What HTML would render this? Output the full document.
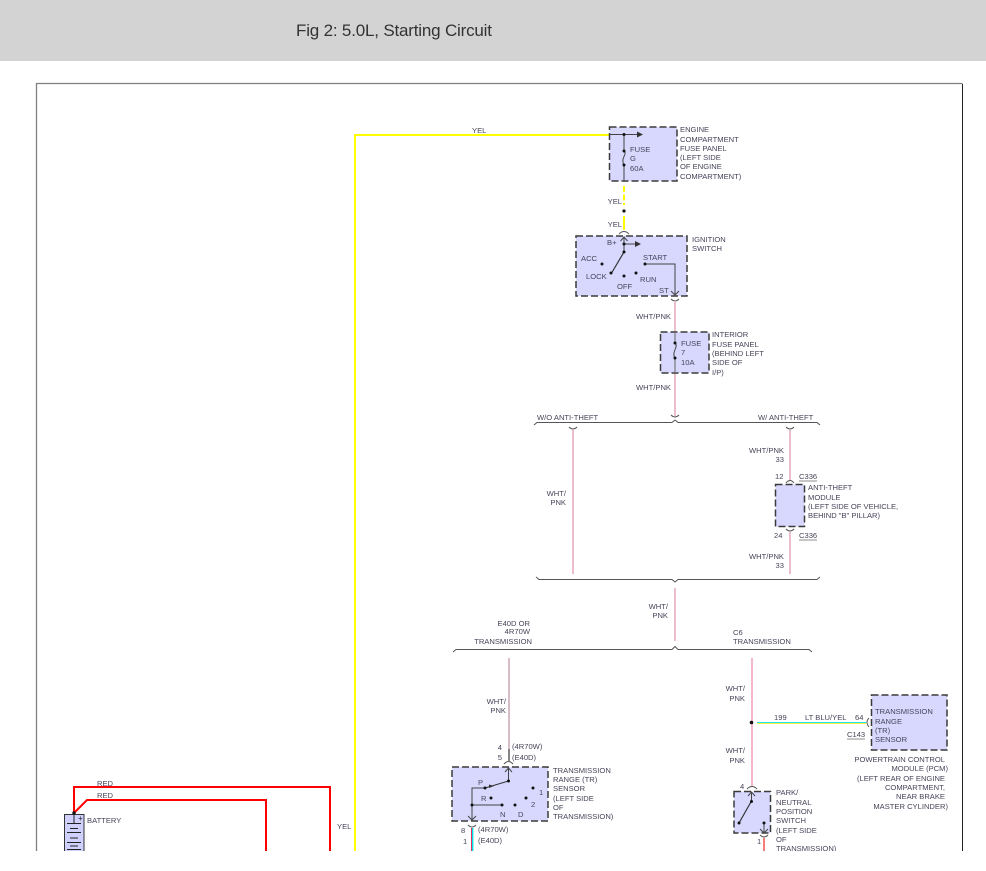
<!DOCTYPE html>
<html>
<head>
<meta charset="utf-8">
<title>Fig 2: 5.0L, Starting Circuit</title>
<style>
html,body{margin:0;padding:0;background:#fff;width:986px;height:871px;overflow:hidden}
svg{display:block}
text{font-family:"Liberation Sans",Arial,sans-serif;font-size:7.6px;fill:#45455a}
.e{text-anchor:end}
.t{font-size:17px;fill:#333}
.box{fill:#d8d8ff;stroke:#3a3a3a;stroke-width:1.500;stroke-dasharray:7 3}
.k{fill:none;stroke:#444;stroke-width:1}
.b{fill:none;stroke:#555;stroke-width:1}
.p{fill:none;stroke:#e8d8de;stroke-width:2}
.q{fill:none;stroke:#eea4ba;stroke-width:1}
.g{fill:none;stroke:#777;stroke-width:1.200}
.d{fill:#111}
.u{fill:none;stroke:#666;stroke-width:.8}
</style>
</head>
<body>
<svg width="986" height="871" viewBox="0 0 986 871" xmlns="http://www.w3.org/2000/svg">
<rect x="0" y="0" width="986" height="61" fill="#d3d3d3"/>
<text class="t" x="296" y="36" textLength="196">Fig 2: 5.0L, Starting Circuit</text>

<!-- frame -->
<path d="M36.500 851V83.500H962.500" fill="none" stroke="#808080" stroke-width="1.300"/>
<path d="M962.500 84V851" fill="none" stroke="#222" stroke-width="1"/>

<!-- yellow main -->
<path d="M355 860V135H609" fill="none" stroke="#ffff00" stroke-width="2"/>
<text x="472" y="133">YEL</text>
<text x="337" y="829">YEL</text>

<!-- engine fuse panel -->
<rect class="box" x="609.500" y="127" width="67.500" height="54"/>
<path class="k" d="M609 134.500H640M624 134.500V151M624 165V181"/>
<path class="k" d="M624 151C628 154 620 158 624 165" stroke-width="1.200"/>
<path d="M637 131.500L643 134.500L637 137.500Z" fill="#333"/>
<circle class="d" cx="624" cy="134.500" r="1.500"/><circle class="d" cx="624" cy="151" r="1.500"/><circle class="d" cx="624" cy="165" r="1.500"/>
<text x="630" y="152">FUSE</text><text x="630" y="161">G</text><text x="630" y="171">60A</text>
<text x="680" y="132">ENGINE</text><text x="680" y="142">COMPARTMENT</text><text x="680" y="151">FUSE PANEL</text><text x="680" y="160">(LEFT SIDE</text><text x="680" y="169">OF ENGINE</text><text x="680" y="179">COMPARTMENT)</text>

<!-- yellow dashed -->
<path d="M624 186V205" fill="none" stroke="#ffff00" stroke-width="2" stroke-dasharray="6 2.500"/>
<path d="M624 216V230" fill="none" stroke="#ffff00" stroke-width="2"/>
<circle class="d" cx="624" cy="211" r="1.600"/>
<text class="e" x="622" y="204">YEL</text><text class="e" x="622" y="227">YEL</text>
<path class="b" d="M619 234Q624 229 629 234"/>

<!-- ignition -->
<rect class="box" x="576" y="236" width="111" height="60"/>
<path class="k" d="M624 237V252M624 244H635M620.500 241L624 237L627.500 241M645 264H675V295M671 291L675 295L679 291"/>
<path d="M635 241L641 244L635 247Z" fill="#333"/>
<path d="M624 252L611 274" fill="none" stroke="#333" stroke-width="1.200"/>
<circle class="d" cx="624" cy="244" r="1.500"/><circle class="d" cx="624" cy="252" r="1.500"/><circle class="d" cx="611" cy="273" r="1.500"/><circle class="d" cx="602" cy="264" r="1.500"/><circle class="d" cx="624" cy="276" r="1.500"/><circle class="d" cx="636" cy="273" r="1.500"/><circle class="d" cx="645" cy="264" r="1.500"/>
<text x="607" y="245">B+</text><text x="581" y="261">ACC</text><text x="586" y="279">LOCK</text><text x="617" y="289">OFF</text><text x="640" y="282">RUN</text><text x="643" y="260">START</text><text x="659" y="293">ST</text>
<text x="692" y="242">IGNITION</text><text x="692" y="251">SWITCH</text>
<path class="b" d="M671 299Q675 303 679 299"/>

<!-- wire to interior fuse -->
<path class="p" d="M675 301V332M675 373V416"/><path class="q" d="M675 301V332M675 373V416"/>
<text class="e" x="671" y="319">WHT/PNK</text>
<text class="e" x="671" y="390">WHT/PNK</text>
<rect class="box" x="660.500" y="332" width="48.500" height="41"/>
<path class="g" d="M675 332V343M675 358V373"/>
<path class="k" d="M675 343C679 347 671 352 675 358" stroke-width="1.200"/>
<circle class="d" cx="675" cy="343" r="1.500"/><circle class="d" cx="675" cy="358" r="1.500"/>
<text x="681" y="346">FUSE</text><text x="681" y="355">7</text><text x="681" y="365">10A</text>
<text x="712" y="337">INTERIOR</text><text x="712" y="347">FUSE PANEL</text><text x="712" y="356">(BEHIND LEFT</text><text x="712" y="365">SIDE OF</text><text x="712" y="375">I/P)</text>

<!-- first bracket -->
<path class="b" d="M671 415Q675 419 679 415"/>
<path class="b" d="M534 425L537 422.500H672L675 420L678 422.500H817L820 425"/>
<text x="537" y="420">W/O ANTI-THEFT</text><text x="758" y="420">W/ ANTI-THEFT</text>
<path class="b" d="M569 427Q573 431 577 427M786 427Q790 431 794 427"/>
<path class="p" d="M573 430V574M790 430V481M790 532V574"/><path class="q" d="M573 430V574M790 430V481M790 532V574"/>
<text class="e" x="566" y="496">WHT/</text><text class="e" x="566" y="505">PNK</text>
<text class="e" x="784" y="453">WHT/PNK</text><text class="e" x="784" y="462">33</text>
<text x="775" y="479">12</text><text x="799" y="479">C336</text><path class="u" d="M799 481H817"/>
<path class="b" d="M786 483Q790 478 794 483"/>
<rect class="box" x="775.500" y="484.500" width="29" height="42"/>
<text x="808" y="490">ANTI-THEFT</text><text x="808" y="500">MODULE</text><text x="808" y="509">(LEFT SIDE OF VEHICLE,</text><text x="808" y="518">BEHIND "B" PILLAR)</text>
<path class="b" d="M786 529Q790 533 794 529"/>
<text x="774" y="538">24</text><text x="799" y="538">C336</text><path class="u" d="M799 540H817"/>
<text class="e" x="784" y="559">WHT/PNK</text><text class="e" x="784" y="568">33</text>

<!-- second bracket -->
<path class="b" d="M536 577L539 579.500H672L675 582L678 579.500H817L820 577"/>
<path class="p" d="M675 588V641"/><path class="q" d="M675 588V641"/>
<text class="e" x="668" y="609">WHT/</text><text class="e" x="668" y="618">PNK</text>

<!-- third bracket -->
<path class="b" d="M453 652L456 649.500H672L675 646.500L678 649.500H809L812 652"/>
<text class="e" x="530" y="626">E40D OR</text><text class="e" x="530" y="634">4R70W</text><text class="e" x="532" y="644">TRANSMISSION</text>
<text x="733" y="635">C6</text><text x="733" y="644">TRANSMISSION</text>

<!-- left branch -->
<path d="M509 658V749" fill="none" stroke="#c0909f" stroke-width="1.200"/>
<path d="M509 749V761" fill="none" stroke="#444" stroke-width="1.300"/>
<text class="e" x="506" y="704">WHT/</text><text class="e" x="506" y="713">PNK</text>
<text class="e" x="502" y="750">4</text><text x="512" y="749">(4R70W)</text>
<text class="e" x="502" y="760">5</text><text x="512" y="760">(E40D)</text>
<path class="b" d="M504 764Q508.500 759 513 764"/>
<rect class="box" x="452" y="767" width="96" height="54"/>
<path class="k" d="M508.500 768V781M505 772L508.500 768L512 772M485 788H472V820M468 816L472 820L476 816M472 805H502"/>
<path d="M508.500 781L485 788" fill="none" stroke="#333" stroke-width="1.100"/>
<path d="M489 784.500L494 786L489 788Z" fill="#333"/>
<circle class="d" cx="508.500" cy="781" r="1.500"/><circle class="d" cx="485" cy="788" r="1.500"/><circle class="d" cx="472" cy="805" r="1.500"/><circle class="d" cx="502" cy="805" r="1.500"/><circle class="d" cx="491" cy="798" r="1.500"/><circle class="d" cx="515" cy="805" r="1.500"/><circle class="d" cx="526" cy="798" r="1.500"/><circle class="d" cx="533" cy="788" r="1.500"/>
<text x="478" y="785">P</text><text x="481" y="801">R</text><text x="539" y="795">1</text><text x="531" y="807">2</text><text x="500" y="817">N</text><text x="518" y="817">D</text>
<text x="553" y="773">TRANSMISSION</text><text x="553" y="782">RANGE (TR)</text><text x="553" y="791">SENSOR</text><text x="553" y="801">(LEFT SIDE</text><text x="553" y="810">OF</text><text x="553" y="819">TRANSMISSION)</text>
<path class="b" d="M468 825Q472 829 476 825"/>
<text x="461" y="833">8</text><text x="478" y="832">(4R70W)</text><text x="463" y="844">1</text><text x="478" y="843">(E40D)</text>
<path d="M471.500 828V851" fill="none" stroke="#e03060" stroke-width="1"/>
<path d="M472.700 828V851" fill="none" stroke="#00e0e0" stroke-width="1.400"/>

<!-- right branch -->
<path d="M752 658V786" fill="none" stroke="#f4b8c8" stroke-width="2"/>
<text class="e" x="745" y="691">WHT/</text><text class="e" x="745" y="701">PNK</text>
<text class="e" x="745" y="753">WHT/</text><text class="e" x="745" y="763">PNK</text>
<circle class="d" cx="751.500" cy="722.500" r="1.800"/>
<path d="M757 722.500H866" fill="none" stroke="#20e6e6" stroke-width="1"/>
<path d="M757 723.500H866" fill="none" stroke="#f0f040" stroke-width="1"/>
<text x="774" y="720">199</text><text x="805" y="720">LT BLU/YEL</text><text x="855" y="720">64</text>
<text x="847" y="737">C143</text><path class="u" d="M847 739H865"/>
<path class="b" d="M869 718Q865 722 869 727"/>
<rect class="box" x="871.500" y="695" width="75.500" height="55"/>
<text x="875" y="714">TRANSMISSION</text><text x="875" y="724">RANGE</text><text x="875" y="733">(TR)</text><text x="875" y="742">SENSOR</text>
<text class="e" x="945" y="762">POWERTRAIN CONTROL</text><text class="e" x="948" y="771">MODULE (PCM)</text><text class="e" x="945" y="781">(LEFT REAR OF ENGINE</text><text class="e" x="945" y="790">COMPARTMENT,</text><text class="e" x="945" y="799">NEAR BRAKE</text><text class="e" x="948" y="809">MASTER CYLINDER)</text>

<text x="740" y="789">4</text>
<path class="b" d="M747 789Q752 784 757 789"/>
<rect class="box" x="734" y="791.500" width="36.500" height="41.500"/>
<path class="k" d="M751.500 792V801M748 796L751.500 792L755 796M764 823V832M760 829L764 833L768 829"/>
<path d="M751.500 801L739 823" fill="none" stroke="#333" stroke-width="1.200"/>
<circle class="d" cx="751.500" cy="801.500" r="1.500"/><circle class="d" cx="739" cy="823" r="1.500"/><circle class="d" cx="764" cy="823" r="1.500"/>
<text x="776" y="795">PARK/</text><text x="776" y="805">NEUTRAL</text><text x="776" y="814">POSITION</text><text x="776" y="823">SWITCH</text><text x="776" y="833">(LEFT SIDE</text><text x="776" y="842">OF</text><text x="776" y="851">TRANSMISSION)</text>
<path class="b" d="M760 835Q764 839 768 835"/>
<text x="757" y="844">1</text>
<path d="M764 838V851" fill="none" stroke="#f05050" stroke-width="1.500"/>

<!-- red wires + battery -->
<path d="M74 813V787H330V860" fill="none" stroke="#ff0000" stroke-width="2"/>
<path d="M74 813L87 800H266V860" fill="none" stroke="#ff0000" stroke-width="2"/>
<text x="97" y="786">RED</text><text x="97" y="798">RED</text>
<rect x="64.500" y="814.500" width="19.500" height="40" fill="#d0d0ff" stroke="#333" stroke-width="1"/>
<circle class="d" cx="74" cy="813" r="1.700"/>
<path d="M74 814V823M67 823.500H81M70 828.500H78M67 832.500H81M70 838H78M67 842.500H81M70 846H78M67 849.500H81" fill="none" stroke="#222" stroke-width="1"/>
<text x="78" y="821" style="font-size:8px;fill:#222">+</text>
<text x="87" y="823">BATTERY</text>

<!-- bottom cutoff -->
<rect x="0" y="851" width="986" height="20" fill="#fff"/>
</svg>
</body>
</html>
